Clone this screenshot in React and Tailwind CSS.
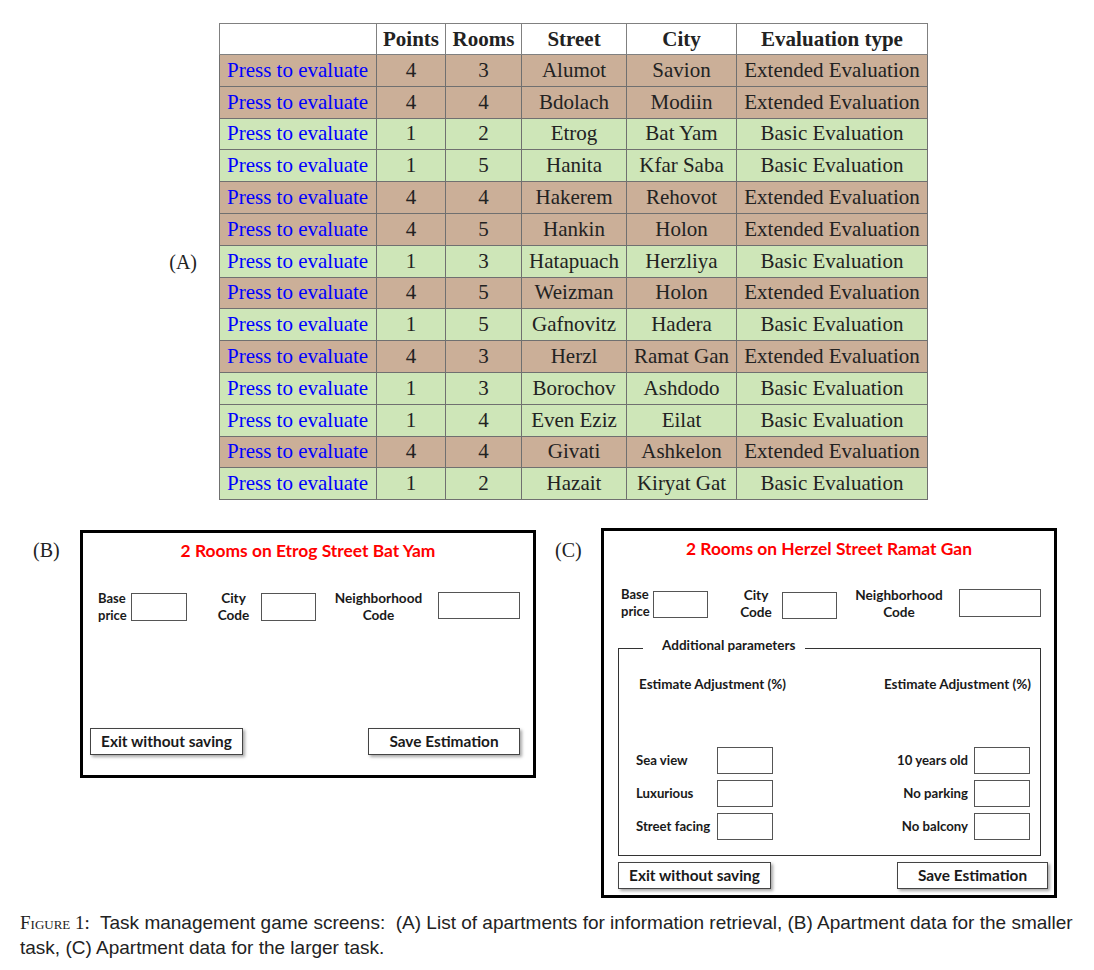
import React from "react";

const rows = [
  ["4", "3", "Alumot", "Savion", "Extended Evaluation", "b"],
  ["4", "4", "Bdolach", "Modiin", "Extended Evaluation", "b"],
  ["1", "2", "Etrog", "Bat Yam", "Basic Evaluation", "g"],
  ["1", "5", "Hanita", "Kfar Saba", "Basic Evaluation", "g"],
  ["4", "4", "Hakerem", "Rehovot", "Extended Evaluation", "b"],
  ["4", "5", "Hankin", "Holon", "Extended Evaluation", "b"],
  ["1", "3", "Hatapuach", "Herzliya", "Basic Evaluation", "g"],
  ["4", "5", "Weizman", "Holon", "Extended Evaluation", "b"],
  ["1", "5", "Gafnovitz", "Hadera", "Basic Evaluation", "g"],
  ["4", "3", "Herzl", "Ramat Gan", "Extended Evaluation", "b"],
  ["1", "3", "Borochov", "Ashdodo", "Basic Evaluation", "g"],
  ["1", "4", "Even Eziz", "Eilat", "Basic Evaluation", "g"],
  ["4", "4", "Givati", "Ashkelon", "Extended Evaluation", "b"],
  ["1", "2", "Hazait", "Kiryat Gat", "Basic Evaluation", "g"],
];

const serif = { fontFamily: '"Liberation Serif", "Times New Roman", serif' };
const ui = { fontFamily: 'Lato, "Open Sans", sans-serif' };

function Box({ className }) {
  return <div className={"border border-[#555] bg-white " + className} />;
}

function Btn({ children, className }) {
  return (
    <div
      className={
        "h-[27px] border border-[#444] bg-white flex items-center justify-center text-[15.4px] font-bold text-[#1a1a1a] shadow-[2px_2px_3px_rgba(0,0,0,0.35)] " +
        className
      }
    >
      {children}
    </div>
  );
}

function Label({ children, className }) {
  return (
    <div className={"text-[13.6px] leading-[17px] font-bold text-[#1a1a1a] " + className}>
      {children}
    </div>
  );
}

export default function App() {
  return (
    <div className="w-[1094px] h-[970px] bg-white overflow-hidden">
      {/* Section A */}
      <div className="flex items-center pt-[23px]">
        <div className="w-[219px] flex justify-end pr-[22px] text-[20px] text-[#222]" style={serif}>
          (A)
        </div>
        <table
          className="border-collapse w-[708px] table-fixed text-[21px] text-[#222]"
          style={serif}
        >
          <colgroup>
            <col className="w-[157px]" />
            <col className="w-[69px]" />
            <col className="w-[76px]" />
            <col className="w-[105px]" />
            <col className="w-[110px]" />
            <col className="w-[191px]" />
          </colgroup>
          <thead>
            <tr className="h-[31px] bg-white">
              <th className="border border-[#808080] p-0"></th>
              <th className="border border-[#808080] p-0 font-bold text-center leading-none">Points</th>
              <th className="border border-[#808080] p-0 font-bold text-center leading-none">Rooms</th>
              <th className="border border-[#808080] p-0 font-bold text-center leading-none">Street</th>
              <th className="border border-[#808080] p-0 font-bold text-center leading-none">City</th>
              <th className="border border-[#808080] p-0 font-bold text-center leading-none">Evaluation type</th>
            </tr>
          </thead>
          <tbody>
            {rows.map((r, i) => (
              <tr
                key={i}
                className={"h-[31.8px] " + (r[5] === "b" ? "bg-[#cbaf98]" : "bg-[#cee6b8]")}
              >
                <td className="border border-[#707070] p-0 pl-[7px] text-left text-[#0000ff] leading-none whitespace-nowrap">
                  Press to evaluate
                </td>
                <td className="border border-[#707070] p-0 text-center leading-none">{r[0]}</td>
                <td className="border border-[#707070] p-0 text-center leading-none">{r[1]}</td>
                <td className="border border-[#707070] p-0 text-center leading-none whitespace-nowrap">{r[2]}</td>
                <td className="border border-[#707070] p-0 text-center leading-none whitespace-nowrap">{r[3]}</td>
                <td className="border border-[#707070] p-0 text-center leading-none whitespace-nowrap">{r[4]}</td>
              </tr>
            ))}
          </tbody>
        </table>
      </div>

      {/* Section B & C */}
      <div className="flex items-start mt-[28px]">
        <div className="w-[80px] pl-[33px] mt-[11px] text-[20px] leading-[23px] text-[#222]" style={serif}>
          (B)
        </div>
        {/* Panel B */}
        <div
          className="w-[456px] h-[248px] mt-[2px] border-[3px] border-black bg-white flex flex-col"
          style={ui}
        >
          <div className="pt-[7px] text-center text-[17.4px] leading-[22px] font-bold text-[#ff0000]">
            2 Rooms on Etrog Street Bat Yam
          </div>
          <div className="flex items-center mt-[28px] pl-[15px]">
            <Label className="w-[33px] text-left !text-[13px]">Base<br />price</Label>
            <Box className="w-[56px] h-[28px]" />
            <Label className="ml-[26px] w-[41px] text-center">City<br />Code</Label>
            <Box className="ml-[7px] w-[55px] h-[28px]" />
            <Label className="ml-[10px] w-[105px] text-center">Neighborhood<br />Code</Label>
            <Box className="ml-[7px] w-[82px] h-[27px] -mt-[3px]" />
          </div>
          <div className="flex-1" />
          <div className="flex justify-between pl-[7px] pr-[13px] pb-[20px]">
            <Btn className="w-[153px]">Exit without saving</Btn>
            <Btn className="w-[152px]">Save Estimation</Btn>
          </div>
        </div>

        <div className="w-[65px] pl-[19px] mt-[11px] text-[20px] leading-[23px] text-[#222]" style={serif}>
          (C)
        </div>
        {/* Panel C */}
        <div
          className="w-[456px] h-[370px] border-[3px] border-black bg-white flex flex-col"
          style={ui}
        >
          <div className="pt-[7px] text-center text-[17.4px] leading-[22px] font-bold text-[#ff0000]">
            2 Rooms on Herzel Street Ramat Gan
          </div>
          <div className="flex items-center mt-[27px] pl-[17px]">
            <Label className="w-[32px] text-left -mt-[2px] !text-[13px]">Base<br />price</Label>
            <Box className="w-[55px] h-[27px]" />
            <Label className="ml-[28px] w-[40px] text-center">City<br />Code</Label>
            <Box className="ml-[6px] w-[55px] h-[27px] mt-[2px]" />
            <Label className="ml-[10px] w-[104px] text-center">Neighborhood<br />Code</Label>
            <Box className="ml-[8px] w-[82px] h-[28px] -mt-[3px]" />
          </div>

          <fieldset className="ml-[14px] mr-[13px] mt-[14px] border border-[#333] p-0 pb-[15px]">
            <legend className="ml-[24px] pl-[19px] pr-[10px] pb-[6px] text-[13.5px] leading-[20px] font-bold text-[#1a1a1a]">
              Additional parameters
            </legend>
            <div className="flex justify-between pl-[20px] pr-[9px] mt-[15px] text-[13.5px] leading-[16px] font-bold text-[#1a1a1a]">
              <span>Estimate Adjustment (%)</span>
              <span>Estimate Adjustment (%)</span>
            </div>
            <div className="flex flex-col gap-[6px] mt-[55px]">
              {[
                ["Sea view", "10 years old"],
                ["Luxurious", "No parking"],
                ["Street facing", "No balcony"],
              ].map(([l, r]) => (
                <div key={l} className="flex items-center justify-between pl-[17px] pr-[10px]">
                  <div className="flex items-center">
                    <div className="w-[81px] text-[13.2px] font-bold text-[#1a1a1a] whitespace-nowrap">{l}</div>
                    <Box className="w-[56px] h-[27px]" />
                  </div>
                  <div className="flex items-center">
                    <div className="mr-[6px] text-[13.2px] font-bold text-[#1a1a1a] text-right">{r}</div>
                    <Box className="w-[56px] h-[27px]" />
                  </div>
                </div>
              ))}
            </div>
          </fieldset>

          <div className="flex justify-between pl-[14px] pr-[6px] mt-[6px]">
            <Btn className="w-[153px]">Exit without saving</Btn>
            <Btn className="w-[151px]">Save Estimation</Btn>
          </div>
        </div>
      </div>

      {/* Caption */}
      <div
        className="mt-[12px] pl-[20px] text-[19px] leading-[25px] text-[#222] whitespace-nowrap"
        style={{ fontFamily: '"Liberation Sans", Arial, sans-serif' }}
      >
        <span className="[font-variant:small-caps]" style={serif}>Figure 1:</span>&nbsp; Task management game screens:&nbsp; (A) List of apartments for information retrieval, (B) Apartment data for the smaller
        <br />
        task, (C) Apartment data for the larger task.
      </div>
    </div>
  );
}
